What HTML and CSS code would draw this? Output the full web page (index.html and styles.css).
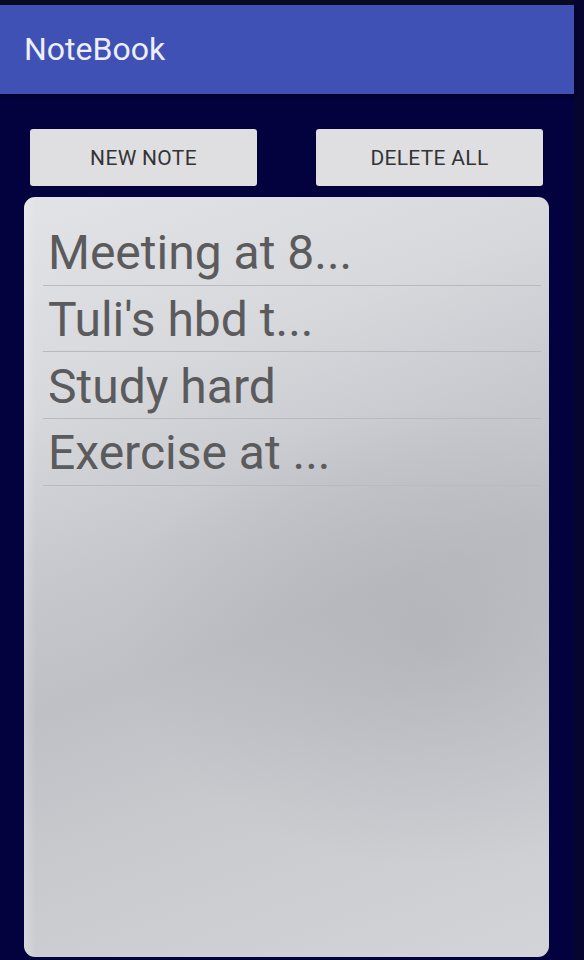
FILE: index.html
```html
<!DOCTYPE html>
<html>
<head>
<meta charset="utf-8">
<link rel="stylesheet" href="styles.css">
</head>
<body>
<div class="screen">
  <div class="topstrip"></div>
  <header class="appbar"><span class="title">NoteBook</span></header>
  <main class="content">
    <div class="buttons">
      <button class="btn">NEW NOTE</button>
      <button class="btn">DELETE ALL</button>
    </div>
    <div class="card">
      <ul class="list">
        <li class="row">Meeting at 8...</li>
        <li class="row">Tuli's hbd t...</li>
        <li class="row">Study hard</li>
        <li class="row">Exercise at ...</li>
      </ul>
    </div>
  </main>
</div>
</body>
</html>
```
FILE: styles.css
```css
html, body {
  margin: 0;
  padding: 0;
  background: #03023c;
  width: 584px;
  height: 960px;
  overflow: hidden;
  font-family: Roboto, "Liberation Sans", sans-serif;
}
.screen {
  width: 574px;
  height: 960px;
  display: flex;
  flex-direction: column;
  background: #03023e;
  border-right: 10px solid #060530;
}
.topstrip {
  height: 5px;
  background: #0a0a22;
}
.appbar {
  height: 89px;
  background: #3f51b5;
  display: flex;
  align-items: center;
  padding-left: 24px;
  box-shadow: 0 2px 3px rgba(0,0,0,0.4);
}
.title {
  color: #eceef8;
  font-size: 32px;
  margin-top: -2px;
}
.content {
  flex: 1;
  display: flex;
  flex-direction: column;
  padding: 35px 25px 3px 24px;
}
.buttons {
  display: flex;
  justify-content: space-between;
  padding: 0 6px;
}
.btn {
  width: 227px;
  height: 57px;
  background: #dfdfe1;
  border: none;
  border-radius: 3px;
  font-family: Roboto, "Liberation Sans", sans-serif;
  font-size: 21px;
  font-weight: 400;
  color: #333336;
  letter-spacing: 0.3px;
  padding: 0;
  box-shadow: 0 1px 2px rgba(0,0,0,0.3);
}
.card {
  margin-top: 11px;
  flex: 1;
  border-radius: 11px;
  background:
    linear-gradient(90deg, rgba(255,255,255,0.22) 0px, rgba(255,255,255,0) 12px),
    radial-gradient(ellipse 60% 30% at 78% 58%, rgba(168,170,177,0.55), rgba(168,170,177,0) 100%),
    linear-gradient(160deg, #e2e3e6 0%, #d8d9dd 22%, #c6c7cc 42%, #bfc0c5 55%, #c9cace 72%, #d3d4d8 100%);
  padding: 22px 8px 0 19px;
}
.list {
  list-style: none;
  margin: 0;
  padding: 0;
}
.row {
  height: 66.7px;
  box-sizing: border-box;
  border-bottom: 1.5px solid #b9babd;
  display: flex;
  align-items: center;
  font-size: 48px;
  color: #5b5b5d;
  padding-left: 5px;
  padding-top: 2px;
}
```
